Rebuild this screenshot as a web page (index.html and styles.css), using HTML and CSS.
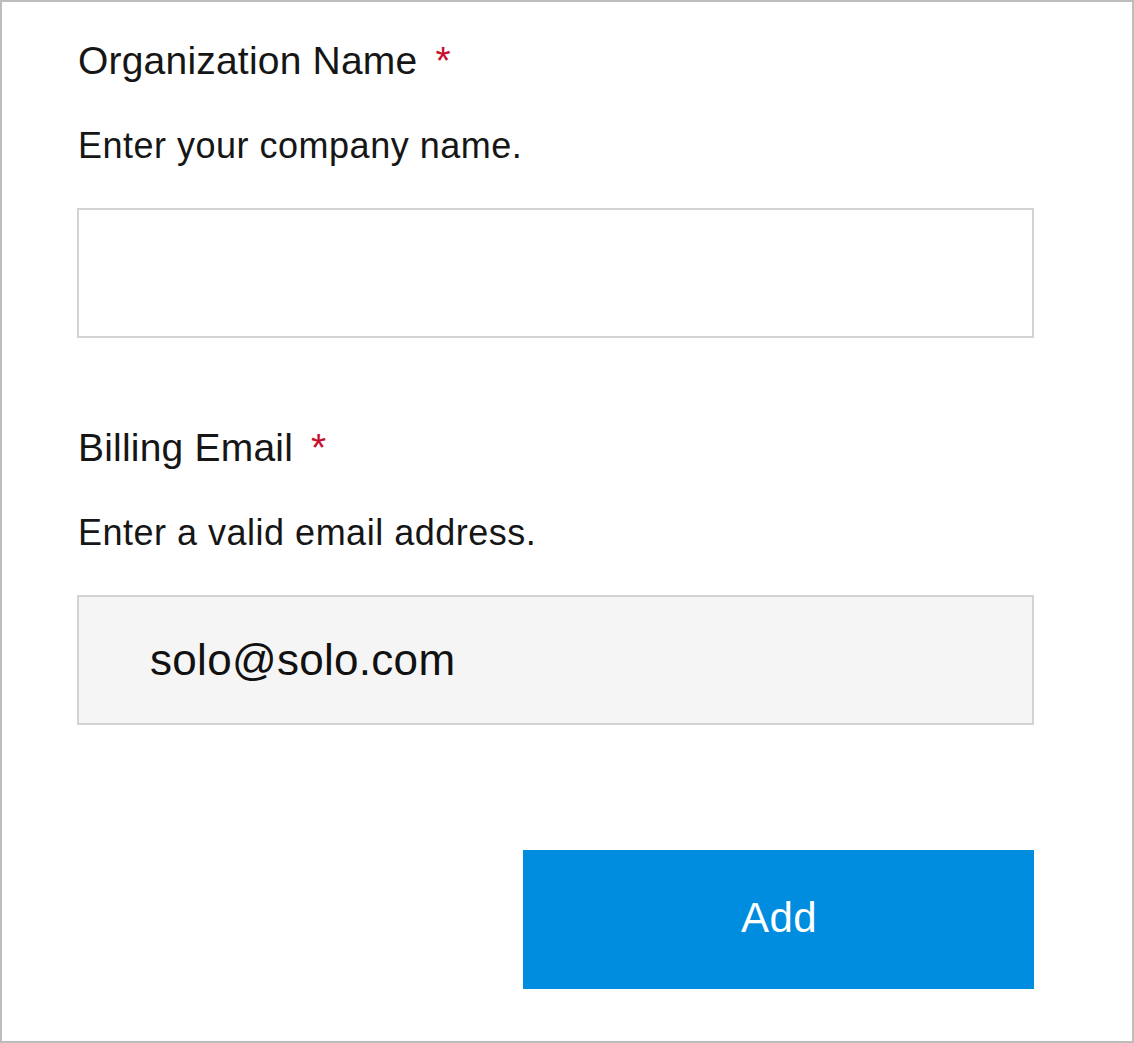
FILE: index.html
```html
<!DOCTYPE html>
<html lang="en">
<head>
<meta charset="utf-8">
<title>Add Organization</title>
<link rel="stylesheet" href="styles.css">
</head>
<body>
<div class="frame">
  <div class="field">
    <div class="label">Organization Name<span class="req">*</span></div>
    <div class="hint">Enter your company name.</div>
    <div class="input"></div>
  </div>
  <div class="field field-second">
    <div class="label">Billing Email<span class="req">*</span></div>
    <div class="hint">Enter a valid email address.</div>
    <div class="input input-filled">solo@solo.com</div>
  </div>
  <div class="actions">
    <button class="btn-add" type="button">Add</button>
  </div>
</div>
</body>
</html>
```

FILE: styles.css
```css
html, body {
  margin: 0;
  padding: 0;
  background: #ffffff;
}

.frame {
  box-sizing: border-box;
  width: 1134px;
  height: 1043px;
  border: 2px solid #bdbdbd;
  padding: 37px 98px 0 75px;
  font-family: "Liberation Sans", Arial, sans-serif;
  color: #161616;
  display: flex;
  flex-direction: column;
}

.field {
  display: flex;
  flex-direction: column;
}

.field-second {
  margin-top: 88px;
}

.label {
  margin-left: 1px;
  height: 44px;
  font-size: 39px;
  line-height: 44px;
  letter-spacing: 0.2px;
}

.req {
  color: #c8102e;
  margin-left: 18px;
}

.hint {
  margin-left: 1px;
  margin-top: 43px;
  height: 40px;
  font-size: 36px;
  line-height: 40px;
  letter-spacing: 0.5px;
}

.input {
  box-sizing: border-box;
  margin-top: 42px;
  height: 130px;
  border: 2px solid #d3d3d3;
  background: #ffffff;
}

.input-filled {
  background: #f5f5f5;
  padding: 38px 0 0 71px;
  font-size: 44px;
  line-height: 50px;
  letter-spacing: 0.3px;
  color: #111111;
}

.actions {
  display: flex;
  justify-content: flex-end;
  margin-top: 125px;
}

.btn-add {
  box-sizing: border-box;
  width: 511px;
  height: 139px;
  margin: 0;
  border: none;
  background: #008de0;
  color: #ffffff;
  font-family: "Liberation Sans", Arial, sans-serif;
  font-size: 42px;
  line-height: 48px;
  letter-spacing: 0.5px;
  padding: 0 0 4px 1px;
  cursor: pointer;
}
```
